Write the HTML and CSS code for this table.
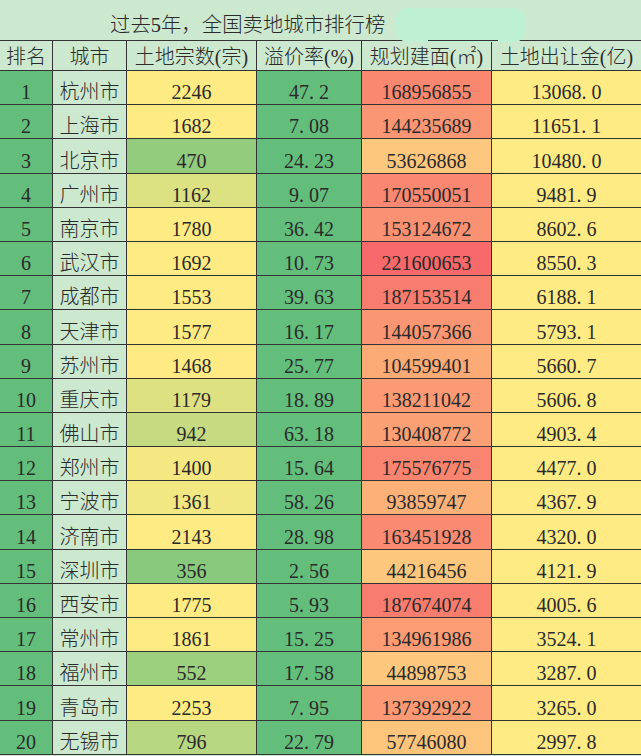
FILE: index.html
```html
<!DOCTYPE html>
<html lang="zh-CN">
<head>
<meta charset="utf-8">
<title>过去5年，全国卖地城市排行榜</title>
<link rel="stylesheet" href="styles.css">
</head>
<body>
<div class="sheet">
  <div class="title">
    <span class="title-text">过去5年，全国卖地城市排行榜</span>
    <span class="blob"></span>
  </div>
  <div class="grid">
    <div class="cell hd">排名</div><div class="cell hd">城市</div><div class="cell hd">土地宗数(宗)</div><div class="cell hd">溢价率(%)</div><div class="cell hd">规划建面(㎡)</div><div class="cell hd">土地出让金(亿)</div>

    <div class="cell rank">1</div><div class="cell city">杭州市</div><div class="cell cnt" style="background:#FFEB84">2246</div><div class="cell rate">47<span class="pt">.</span>2</div><div class="cell area" style="background:#FA8871">168956855</div><div class="cell rev">13068<span class="pt">.</span>0</div>
    <div class="cell rank">2</div><div class="cell city">上海市</div><div class="cell cnt" style="background:#FFEB84">1682</div><div class="cell rate">7<span class="pt">.</span>08</div><div class="cell area" style="background:#FA9674">144235689</div><div class="cell rev">11651<span class="pt">.</span>1</div>
    <div class="cell rank">3</div><div class="cell city">北京市</div><div class="cell cnt" style="background:#94CC7E">470</div><div class="cell rate">24<span class="pt">.</span>23</div><div class="cell area" style="background:#FDC87D">53626868</div><div class="cell rev">10480<span class="pt">.</span>0</div>
    <div class="cell rank">4</div><div class="cell city">广州市</div><div class="cell cnt" style="background:#DCE182">1162</div><div class="cell rate">9<span class="pt">.</span>07</div><div class="cell area" style="background:#FA8771">170550051</div><div class="cell rev">9481<span class="pt">.</span>9</div>
    <div class="cell rank">5</div><div class="cell city">南京市</div><div class="cell cnt" style="background:#FFEB84">1780</div><div class="cell rate">36<span class="pt">.</span>42</div><div class="cell area" style="background:#FA9173">153124672</div><div class="cell rev">8602<span class="pt">.</span>6</div>
    <div class="cell rank">6</div><div class="cell city">武汉市</div><div class="cell cnt" style="background:#FFEB84">1692</div><div class="cell rate">10<span class="pt">.</span>73</div><div class="cell area" style="background:#F8696B">221600653</div><div class="cell rev">8550<span class="pt">.</span>3</div>
    <div class="cell rank">7</div><div class="cell city">成都市</div><div class="cell cnt" style="background:#FFEB84">1553</div><div class="cell rate">39<span class="pt">.</span>63</div><div class="cell area" style="background:#F97D6F">187153514</div><div class="cell rev">6188<span class="pt">.</span>1</div>
    <div class="cell rank">8</div><div class="cell city">天津市</div><div class="cell cnt" style="background:#FFEB84">1577</div><div class="cell rate">16<span class="pt">.</span>17</div><div class="cell area" style="background:#FA9674">144057366</div><div class="cell rev">5793<span class="pt">.</span>1</div>
    <div class="cell rank">9</div><div class="cell city">苏州市</div><div class="cell cnt" style="background:#FFEA84">1468</div><div class="cell rate">25<span class="pt">.</span>77</div><div class="cell area" style="background:#FCAB77">104599401</div><div class="cell rev">5660<span class="pt">.</span>7</div>
    <div class="cell rank">10</div><div class="cell city">重庆市</div><div class="cell cnt" style="background:#DEE182">1179</div><div class="cell rate">18<span class="pt">.</span>89</div><div class="cell area" style="background:#FB9A74">138211042</div><div class="cell rev">5606<span class="pt">.</span>8</div>
    <div class="cell rank">11</div><div class="cell city">佛山市</div><div class="cell cnt" style="background:#C5DA81">942</div><div class="cell rate">63<span class="pt">.</span>18</div><div class="cell area" style="background:#FB9F75">130408772</div><div class="cell rev">4903<span class="pt">.</span>4</div>
    <div class="cell rank">12</div><div class="cell city">郑州市</div><div class="cell cnt" style="background:#F5E883">1400</div><div class="cell rate">15<span class="pt">.</span>64</div><div class="cell area" style="background:#F98470">175576775</div><div class="cell rev">4477<span class="pt">.</span>0</div>
    <div class="cell rank">13</div><div class="cell city">宁波市</div><div class="cell cnt" style="background:#F1E783">1361</div><div class="cell rate">58<span class="pt">.</span>26</div><div class="cell area" style="background:#FCB179">93859747</div><div class="cell rev">4367<span class="pt">.</span>9</div>
    <div class="cell rank">14</div><div class="cell city">济南市</div><div class="cell cnt" style="background:#FFEB84">2143</div><div class="cell rate">28<span class="pt">.</span>98</div><div class="cell area" style="background:#FA8B72">163451928</div><div class="cell rev">4320<span class="pt">.</span>0</div>
    <div class="cell rank">15</div><div class="cell city">深圳市</div><div class="cell cnt" style="background:#88C97D">356</div><div class="cell rate">2<span class="pt">.</span>56</div><div class="cell area" style="background:#FDC77D">44216456</div><div class="cell rev">4121<span class="pt">.</span>9</div>
    <div class="cell rank">16</div><div class="cell city">西安市</div><div class="cell cnt" style="background:#FFEB84">1775</div><div class="cell rate">5<span class="pt">.</span>93</div><div class="cell area" style="background:#F97D6F">187674074</div><div class="cell rev">4005<span class="pt">.</span>6</div>
    <div class="cell rank">17</div><div class="cell city">常州市</div><div class="cell cnt" style="background:#FFEB84">1861</div><div class="cell rate">15<span class="pt">.</span>25</div><div class="cell area" style="background:#FB9C75">134961986</div><div class="cell rev">3524<span class="pt">.</span>1</div>
    <div class="cell rank">18</div><div class="cell city">福州市</div><div class="cell cnt" style="background:#9CCF7E">552</div><div class="cell rate">17<span class="pt">.</span>58</div><div class="cell area" style="background:#FDC77D">44898753</div><div class="cell rev">3287<span class="pt">.</span>0</div>
    <div class="cell rank">19</div><div class="cell city">青岛市</div><div class="cell cnt" style="background:#FFEB84">2253</div><div class="cell rate">7<span class="pt">.</span>95</div><div class="cell area" style="background:#FB9A74">137392922</div><div class="cell rev">3265<span class="pt">.</span>0</div>
    <div class="cell rank">20</div><div class="cell city">无锡市</div><div class="cell cnt" style="background:#B6D680">796</div><div class="cell rate">22<span class="pt">.</span>79</div><div class="cell area" style="background:#FDC47C">57746080</div><div class="cell rev">2997<span class="pt">.</span>8</div>
  </div>
</div>
</body>
</html>
```
FILE: styles.css
```css
html, body {
  margin: 0;
  padding: 0;
  background: #CCE8CF;
  overflow: hidden;
}

.sheet {
  width: 641px;
  height: 756px;
  font-family: "Liberation Serif", "Noto Sans CJK SC", serif;
  font-weight: 300;
  color: #2a2a2a;
}

.title {
  position: relative;
  height: 40px;
  border-bottom: 1px solid #333;
  display: flex;
  align-items: flex-end;
  padding-left: 110px;
  box-sizing: content-box;
  font-size: 20.4px;
  line-height: 22px;
}

.title-text {
  padding-bottom: 4px;
}

.blob {
  position: absolute;
  left: 396px;
  top: 8px;
  width: 130px;
  height: 34px;
  border-radius: 12px;
  background: #BEF0D3;
}

.blob::after {
  content: "";
  position: absolute;
  left: 32px;
  bottom: 1px;
  width: 70px;
  height: 1px;
  background: #333;
}

.grid {
  display: grid;
  grid-template-columns: 52px 73px 129px 104px 129px 1fr;
  grid-template-rows: 29px repeat(20, 33.2px);
  gap: 1px;
  background: #333;
  padding-bottom: 1px;
}

.cell {
  display: flex;
  align-items: flex-end;
  justify-content: center;
  font-size: 20px;
  line-height: 20px;
  padding-bottom: 2px;
  box-sizing: border-box;
  white-space: nowrap;
  background: #CCE8CF;
}

.hd {
  background: #CCE8CF;
  padding-bottom: 3px;
}

.rank {
  background: #63BE7B;
}

.city {
  background: #CCE8CF;
}

.rate {
  background: #63BE7B;
}

.rev {
  background: #FFEB84;
}

.pt {
  margin-right: 5px;
}
```
